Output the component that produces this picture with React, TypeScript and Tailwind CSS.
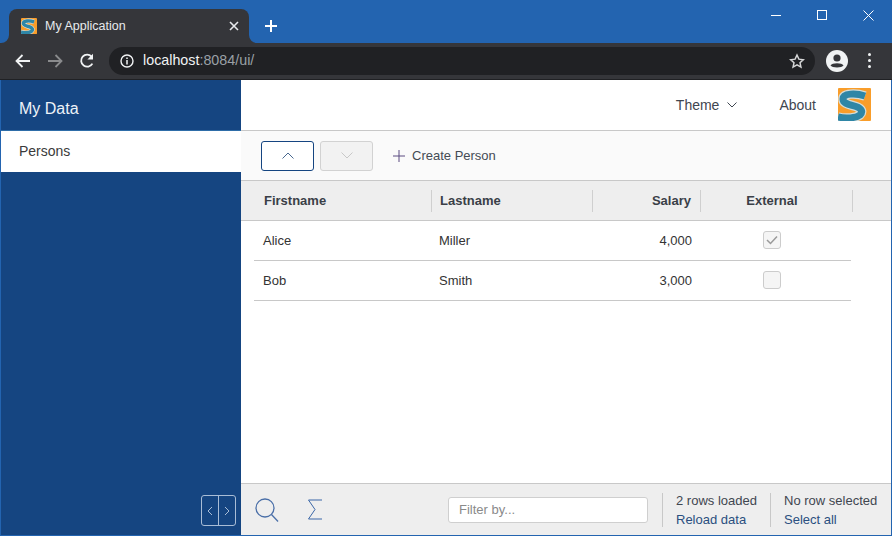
import React from "react";

const S_PATH = "M27 8 C18 5 5 5 5 11 C5 16 12 16.5 18 18.5 C24 20.5 25 24 22 27 C18 30 8 31 0 29";

const SLogo = ({ size }: { size: number }) => (
  <svg width={size} height={size} viewBox="0 0 33 33" className="block shrink-0">
    <rect width="33" height="33" rx="1" fill="#f99d2a" />
    <path d={S_PATH} fill="none" stroke="#d5dcd8" strokeWidth="9.5" />
    <path d={S_PATH} fill="none" stroke="#2f86a6" strokeWidth="7" />
  </svg>
);

const Flare = ({ side }: { side: "left" | "right" }) => (
  <svg
    width="8"
    height="8"
    viewBox="0 0 8 8"
    className={side === "left" ? "absolute bottom-0 left-[-8px]" : "absolute bottom-0 right-[-8px]"}
  >
    <path d={side === "left" ? "M8 0 V8 H0 A8 8 0 0 0 8 0 Z" : "M0 0 V8 H8 A8 8 0 0 1 0 0 Z"} fill="#35363a" />
  </svg>
);

const TabBar = () => (
  <div className="flex h-[43px] items-end bg-[#2364b0] pl-[9px] pr-px">
    <div className="relative flex h-[34px] w-[240px] items-center rounded-t-lg bg-[#35363a] pl-3 pr-2.5">
      <Flare side="left" />
      <Flare side="right" />
      <SLogo size={16} />
      <span className="ml-2 flex-1 text-[12.5px] text-[#e8eaed]">My Application</span>
      <svg width="10" height="10" viewBox="0 0 10 10" stroke="#e8eaed" strokeWidth="1.6">
        <path d="M1 1 L9 9 M9 1 L1 9" />
      </svg>
    </div>
    <svg width="12" height="12" viewBox="0 0 12 12" stroke="#fff" strokeWidth="2" className="mb-[11px] ml-[16px]">
      <path d="M6 0 V12 M0 6 H12" />
    </svg>
    <div className="mb-auto ml-auto flex">
      <div className="flex h-[30px] w-[46px] items-center justify-center">
        <div className="h-px w-[10px] bg-white" />
      </div>
      <div className="flex h-[30px] w-[46px] items-center justify-center">
        <div className="h-[10px] w-[10px] border border-white" />
      </div>
      <div className="flex h-[30px] w-[46px] items-center justify-center">
        <svg width="11" height="11" viewBox="0 0 11 11" stroke="#fff" strokeWidth="1">
          <path d="M0.5 0.5 L10.5 10.5 M10.5 0.5 L0.5 10.5" />
        </svg>
      </div>
    </div>
  </div>
);

const AddressBar = () => (
  <div className="flex h-[37px] items-center border-b border-[#202124] bg-[#35363a] pb-px pl-[15px] pr-[21px]">
    <svg width="16" height="14" viewBox="0 0 16 14" fill="none" stroke="#f1f3f4" strokeWidth="1.8">
      <path d="M15 7 H2 M7.5 1 L1.5 7 L7.5 13" />
    </svg>
    <svg width="16" height="14" viewBox="0 0 16 14" fill="none" stroke="#8a8b8d" strokeWidth="1.8" className="ml-[16px]">
      <path d="M1 7 H14 M8.5 1 L14.5 7 L8.5 13" />
    </svg>
    <svg width="16" height="16" viewBox="0 0 16 16" fill="none" className="ml-[16px]">
      <path d="M13.4 10.6 A6 6 0 1 1 12.6 3.6" stroke="#f1f3f4" strokeWidth="1.8" />
      <path d="M14 0.8 V6.4 H8.4 Z" fill="#f1f3f4" />
    </svg>
    <div className="ml-[14px] flex h-7 flex-1 items-center rounded-full bg-[#202124] pl-[11px] pr-[10px]">
      <svg width="14" height="14" viewBox="0 0 14 14" fill="none">
        <circle cx="7" cy="7" r="6" stroke="#f1f3f4" strokeWidth="1.4" />
        <path d="M7 6 V10.5 M7 3.4 V5" stroke="#f1f3f4" strokeWidth="1.5" />
      </svg>
      <span className="ml-[9px] flex-1 text-[14.3px] text-[#f1f3f4]">
        localhost<span className="text-[#9aa0a6]">:8084/ui/</span>
      </span>
      <svg width="16" height="16" viewBox="0 0 24 24" fill="none" stroke="#d6d7d8" strokeWidth="2.2">
        <path d="M12 3 L14.8 9.2 L21.5 10 L16.5 14.5 L17.9 21.2 L12 17.8 L6.1 21.2 L7.5 14.5 L2.5 10 L9.2 9.2 Z" />
      </svg>
    </div>
    <svg width="22" height="22" viewBox="0 0 22 22" className="ml-[11px]">
      <circle cx="11" cy="11" r="11" fill="#f1f3f4" />
      <circle cx="11" cy="8" r="3.6" fill="#35363a" />
      <path d="M4.5 15.5 C6 12.5 16 12.5 17.5 15.5 C16 18 6 18 4.5 15.5 Z" fill="#35363a" />
    </svg>
    <div className="ml-[20px] flex flex-col gap-[3px]">
      <div className="h-[3px] w-[3px] rounded-full bg-[#f1f3f4]" />
      <div className="h-[3px] w-[3px] rounded-full bg-[#f1f3f4]" />
      <div className="h-[3px] w-[3px] rounded-full bg-[#f1f3f4]" />
    </div>
  </div>
);

const Sidebar = () => (
  <div className="flex w-[240px] shrink-0 flex-col bg-[#154581]">
    <div className="flex h-[51px] shrink-0 items-center border-b border-[#2e6da8] pl-[18px] pt-[8px] text-[16px] text-[#eef3f8]">
      My Data
    </div>
    <div className="flex h-[41px] shrink-0 items-center bg-white pl-[18px] text-[14px] text-[#3a3a3a]">Persons</div>
    <div className="mb-[9px] mr-[5px] mt-auto flex h-[31px] w-[35px] self-end rounded-[3px] border border-[#a9bdd6]">
      <div className="flex flex-1 items-center justify-center border-r border-[#a9bdd6]">
        <svg width="6" height="10" viewBox="0 0 6 10" fill="none" stroke="#a9bdd6" strokeWidth="1">
          <path d="M5 1 L1 5 L5 9" />
        </svg>
      </div>
      <div className="flex flex-1 items-center justify-center">
        <svg width="6" height="10" viewBox="0 0 6 10" fill="none" stroke="#a9bdd6" strokeWidth="1">
          <path d="M1 1 L5 5 L1 9" />
        </svg>
      </div>
    </div>
  </div>
);

const AppHeader = () => (
  <div className="flex h-[51px] shrink-0 items-center border-b border-[#c8c8c8] bg-white pr-[20px] text-[14px] text-[#3f4650]">
    <span className="ml-auto">Theme</span>
    <svg width="10" height="6" viewBox="0 0 10 6" fill="none" stroke="#3f4650" strokeWidth="1" className="ml-[8px]">
      <path d="M0.5 0.5 L5 5 L9.5 0.5" />
    </svg>
    <span className="ml-[42px]">About</span>
    <div className="mb-[2px] ml-[22px]">
      <SLogo size={33} />
    </div>
  </div>
);

const ActionBar = () => (
  <div className="flex h-[50px] shrink-0 items-center border-b border-[#c8c8c8] bg-[#fafafa] pl-[20px]">
    <div className="flex h-[30px] w-[53px] items-center justify-center rounded-[3px] border border-[#154581] bg-white">
      <svg width="12" height="7" viewBox="0 0 12 7" fill="none" stroke="#48688f" strokeWidth="1">
        <path d="M0.5 6.5 L6 1 L11.5 6.5" />
      </svg>
    </div>
    <div className="ml-[6px] flex h-[30px] w-[53px] items-center justify-center rounded-[3px] border border-[#d2d2d2] bg-[#f2f2f2]">
      <svg width="12" height="7" viewBox="0 0 12 7" fill="none" stroke="#c8c8c8" strokeWidth="1">
        <path d="M0.5 0.5 L6 6 L11.5 0.5" />
      </svg>
    </div>
    <svg width="12" height="12" viewBox="0 0 12 12" stroke="#5a4a80" strokeWidth="1" className="ml-[20px]">
      <path d="M6 0 V12 M0 6 H12" />
    </svg>
    <span className="ml-[7px] text-[13px] text-[#444b55]">Create Person</span>
  </div>
);

const Th = ({ w, pad, divider, children }: { w: string; pad: string; divider?: boolean; children: React.ReactNode }) => (
  <div className={`${w} ${pad} flex h-[22px] shrink-0 items-center text-[13px] font-bold text-[#3a3f47] ${divider ? "border-r border-[#cfcfcf]" : ""}`}>
    {children}
  </div>
);

const TableHeader = () => (
  <div className="flex h-[40px] shrink-0 items-center border-b border-[#c8c8c8] bg-[#eeeeee] pl-[13px]">
    <Th w="w-[178px]" pad="pl-[10px]" divider>Firstname</Th>
    <Th w="w-[161px]" pad="pl-[8px]" divider>Lastname</Th>
    <Th w="w-[108px]" pad="justify-end pr-[9px]" divider>Salary</Th>
    <Th w="w-[152px]" pad="justify-center pr-[9px]" divider>External</Th>
  </div>
);

const Row = ({ first, last, salary, checked }: { first: string; last: string; salary: string; checked: boolean }) => (
  <div className="ml-[13px] flex h-[40px] w-[597px] items-center border-b border-[#c8c8c8] pb-px text-[13px] text-[#333]">
    <div className="w-[176px] pl-[9px] pt-[2px]">{first}</div>
    <div className="w-[161px] pl-[9px] pt-[2px]">{last}</div>
    <div className="w-[114px] pr-[13px] pt-[2px] text-right">{salary}</div>
    <div className="flex w-[146px] justify-center pr-[13px]">
      <div className="flex h-[18px] w-[18px] items-center justify-center rounded-[3px] border border-[#cccccc] bg-[#f5f5f5]">
        {checked && (
          <svg width="12" height="10" viewBox="0 0 12 10" fill="none" stroke="#9a9a9a" strokeWidth="1.5">
            <path d="M1 5 L4.5 8.5 L11 1.5" />
          </svg>
        )}
      </div>
    </div>
  </div>
);

const Footer = () => (
  <div className="mt-auto flex h-[52px] shrink-0 items-center border-t border-[#c8c8c8] bg-[#eeeeee] pl-[14px] text-[13px]">
    <svg width="24" height="24" viewBox="0 0 24 24" fill="none" stroke="#4a6fa8" strokeWidth="1.3">
      <circle cx="10" cy="10" r="9" />
      <path d="M16.5 16.5 L23 23.5" />
    </svg>
    <svg width="16" height="21" viewBox="0 0 16 21" fill="none" stroke="#3b67a8" strokeWidth="1" className="ml-[28px]">
      <path d="M15 1 H1.5 L8 10.5 L1.5 20 H15" />
    </svg>
    <div className="ml-[125px] flex h-[26px] w-[200px] items-center rounded-[3px] border border-[#cfcfcf] bg-white pl-[10px] text-[#8a8a8a]">
      Filter by...
    </div>
    <div className="ml-[14px] flex h-[34px] w-[108px] flex-col justify-between border-l border-[#c8c8c8] pl-[13px] leading-[15px]">
      <span className="text-[#3f4650]">2 rows loaded</span>
      <span className="text-[#2a4f80]">Reload data</span>
    </div>
    <div className="flex h-[34px] flex-col justify-between border-l border-[#c8c8c8] pl-[13px] leading-[15px]">
      <span className="text-[#3f4650]">No row selected</span>
      <span className="text-[#2a4f80]">Select all</span>
    </div>
  </div>
);

export default function App() {
  return (
    <div
      className="flex h-[536px] w-[892px] flex-col overflow-hidden bg-[#2364b0]"
      style={{ fontFamily: '"Liberation Sans", Arial, sans-serif' }}
    >
      <TabBar />
      <AddressBar />
      <div className="flex min-h-0 flex-1 px-px pb-px">
        <Sidebar />
        <div className="flex min-w-0 flex-1 flex-col bg-white">
          <AppHeader />
          <ActionBar />
          <TableHeader />
          <Row first="Alice" last="Miller" salary="4,000" checked />
          <Row first="Bob" last="Smith" salary="3,000" checked={false} />
          <Footer />
        </div>
      </div>
    </div>
  );
}
